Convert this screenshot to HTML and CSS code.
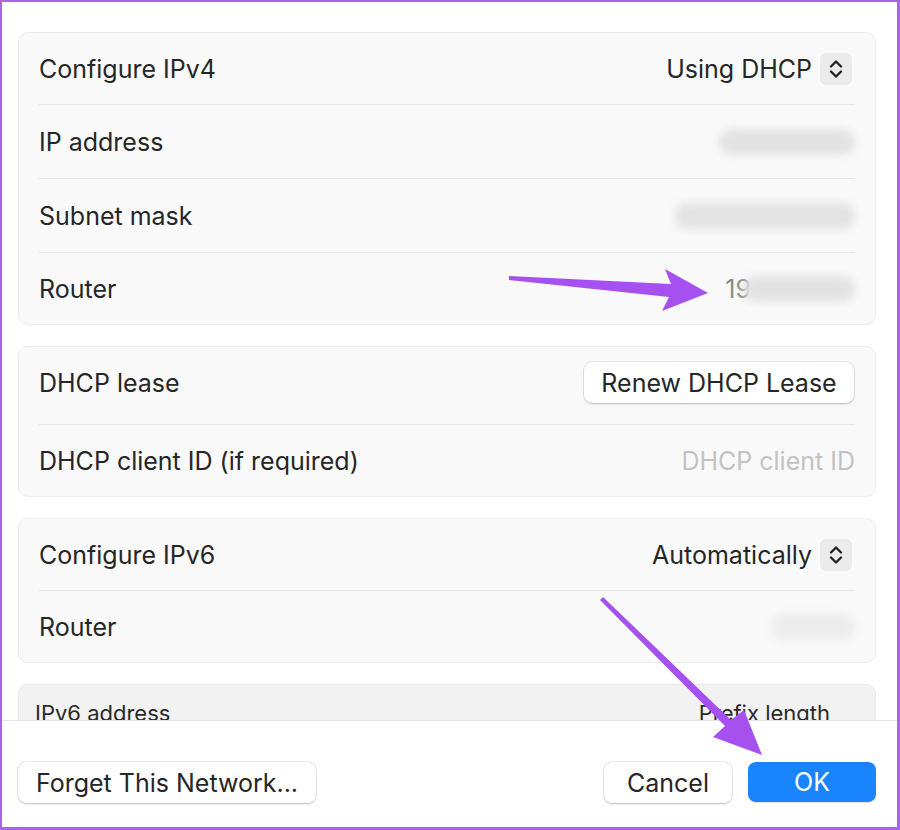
FILE: index.html
```html
<!DOCTYPE html>
<html lang="en">
<head>
  <meta charset="UTF-8">
  <meta name="viewport" content="width=device-width, initial-scale=1.0">
  <title>TCP/IP</title>
  <link rel="stylesheet" href="styles.css">
</head>
<body>
  <div class="window">
    <div class="content">
      <section class="group">
        <div class="row">
          <span class="label">Configure IPv4</span>
          <span class="value">Using DHCP
            <span class="stepper">
              <svg width="32" height="32" viewBox="0 0 32 32"><path d="M11 13.5 L16 8.5 L21 13.5 M11 18.5 L16 23.5 L21 18.5" fill="none" stroke="#1f1f1f" stroke-width="2.3" stroke-linecap="round" stroke-linejoin="round"/></svg>
            </span>
          </span>
        </div>
        <div class="row">
          <span class="label">IP address</span>
          <span class="blur" style="width: 136px"></span>
        </div>
        <div class="row">
          <span class="label">Subnet mask</span>
          <span class="blur" style="width: 180px"></span>
        </div>
        <div class="row">
          <span class="label">Router</span>
          <span class="value muted">19<span class="blur" style="width: 112px"></span></span>
        </div>
      </section>

      <section class="group">
        <div class="row row-tall">
          <span class="label">DHCP lease</span>
          <button class="btn renew">Renew DHCP Lease</button>
        </div>
        <div class="row">
          <span class="label">DHCP client ID (if required)</span>
          <span class="value placeholder">DHCP client ID</span>
        </div>
      </section>

      <section class="group">
        <div class="row">
          <span class="label">Configure IPv6</span>
          <span class="value">Automatically
            <span class="stepper">
              <svg width="32" height="32" viewBox="0 0 32 32"><path d="M11 13.5 L16 8.5 L21 13.5 M11 18.5 L16 23.5 L21 18.5" fill="none" stroke="#1f1f1f" stroke-width="2.3" stroke-linecap="round" stroke-linejoin="round"/></svg>
            </span>
          </span>
        </div>
        <div class="row">
          <span class="label">Router</span>
          <span class="blur light" style="width: 84px"></span>
        </div>
      </section>

      <section class="group table">
        <div class="table-head">
          <span>IPv6 address</span>
          <span>Prefix length</span>
        </div>
      </section>
    </div>

    <footer class="footer">
      <button class="btn forget">Forget This Network...</button>
      <div class="actions">
        <button class="btn cancel">Cancel</button>
        <button class="btn ok">OK</button>
      </div>
    </footer>

    <svg class="annotations" width="900" height="830" viewBox="0 0 900 830">
      <polygon points="509,276 671,284 665,269 708,293 662,311 669,297 509,280" fill="#a650f0"/>
      <polygon points="600,600 725,726 713,737 762,755 744,710 731,720 603,597" fill="#a650f0"/>
    </svg>
  </div>
</body>
</html>
```

FILE: styles.css
```css
* {
  box-sizing: border-box;
}
body {
  margin: 0;
  background: #ffffff;
  font-family: 'Inter', 'Noto Sans', sans-serif;
  color: #262626;
}
.window {
  position: relative;
  width: 900px;
  height: 830px;
  border: solid #a864ea;
  border-width: 2px 3px 3px 2px;
  background: #ffffff;
  display: flex;
  flex-direction: column;
  overflow: hidden;
}
.content {
  height: 718px;
  flex: none;
  overflow: hidden;
  padding: 30px 21px 0 16px;
}
.group {
  background: #f9f9f9;
  border: 1px solid #ececec;
  border-radius: 10px;
  margin-bottom: 21px;
}
.row {
  margin: 0 20px;
  height: 74px;
  display: flex;
  align-items: center;
  justify-content: space-between;
  border-bottom: 1px solid #e6e6e6;
  font-size: 25px;
}
.row:first-child {
  height: 72px;
}
.row:last-child {
  height: 71px;
  border-bottom: none;
}
.row-tall,
.row-tall:first-child {
  height: 78px;
  padding-bottom: 6px;
}
.label {
  color: #262626;
}
.value {
  display: flex;
  align-items: center;
  color: #262626;
}
.value.muted {
  color: #8c8c8c;
}
.value.placeholder {
  color: #c2c2c2;
}
.stepper {
  width: 32px;
  height: 32px;
  margin-left: 8px;
  margin-right: 3px;
  border-radius: 6px;
  background: #ebebeb;
  display: flex;
}
.blur {
  display: inline-block;
  height: 26px;
  border-radius: 13px;
  background: #e2e2e2;
  filter: blur(4px);
}
.blur.light {
  background: #ececec;
}
.value .blur {
  margin-left: -8px;
}

.btn {
  font-family: inherit;
  font-size: 25px;
  color: #262626;
  height: 41px;
  padding: 0 12px;
  background: #ffffff;
  border: none;
  border-radius: 8px;
  box-shadow: 0 0 0 0.5px rgba(0, 0, 0, 0.14), 0 1px 2px rgba(0, 0, 0, 0.2);
}
.renew {
  width: 270px;
  margin-right: 1px;
}

.table {
  background: #f2f2f2;
  border-color: #e8e8e8;
  height: 80px;
}
.table-head {
  display: flex;
  justify-content: space-between;
  padding: 15px 45px 0 16px;
  font-size: 22px;
  color: #2a2a2a;
}

.footer {
  flex: 1;
  border-top: 1px solid #e3e3e3;
  padding: 41px 21px 0 16px;
  display: flex;
  justify-content: space-between;
  align-items: flex-start;
}
.forget {
  width: 298px;
}
.actions {
  display: flex;
  gap: 16px;
}
.cancel {
  width: 128px;
}
.ok {
  width: 128px;
  height: 40px;
  background: #1a84fc;
  color: #ffffff;
  box-shadow: 0 1px 1px rgba(0, 0, 0, 0.12);
}

.annotations {
  position: absolute;
  left: -2px;
  top: -2px;
  pointer-events: none;
}
```
